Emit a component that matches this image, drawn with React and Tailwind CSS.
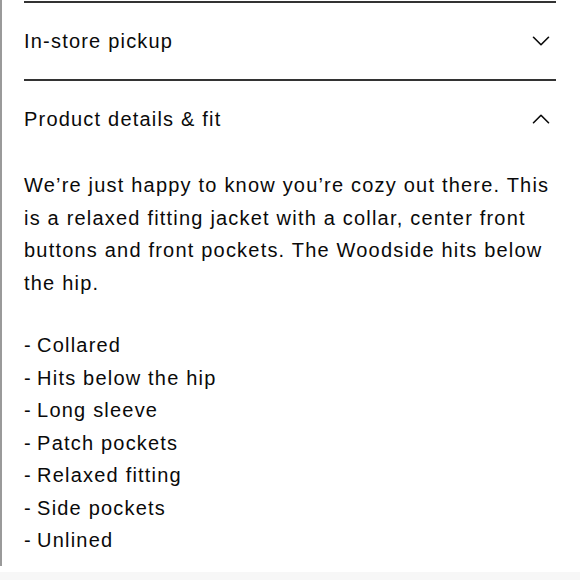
import { ChevronDown, ChevronUp } from 'lucide-react'

const bullets = [
  'Collared',
  'Hits below the hip',
  'Long sleeve',
  'Patch pockets',
  'Relaxed fitting',
  'Side pockets',
  'Unlined',
]

function Row({ title, open }) {
  const Icon = open ? ChevronUp : ChevronDown
  return (
    <div className="flex items-center justify-between h-[78px] border-t-2 border-[#333]">
      <span className="text-[20px] tracking-[0.06em] text-[#0a0a0a]">{title}</span>
      <Icon size={30} strokeWidth={1.3} className="text-[#0a0a0a]" />
    </div>
  )
}

export default function App() {
  return (
    <div className="w-[580px] h-[580px] bg-white flex flex-col" style={{ fontFamily: '"Liberation Sans", Arial, sans-serif' }}>
      <div className="h-[566px] border-l-2 border-[#9a9a9a] pl-[22px] pr-[24px] pt-[1px]">
        <Row title="In-store pickup" />
        <Row title="Product details & fit" open />
        <div className="text-[20px] tracking-[0.06em] leading-[32.5px] text-[#0a0a0a] pt-[12px]">
          <p>
            We’re just happy to know you’re cozy out there. This is a relaxed fitting jacket with a collar, center front buttons and front pockets. The Woodside hits below the hip.
          </p>
          <ul className="mt-[30px]">
            {bullets.map(b => <li key={b}>-{'\u2009'}{b}</li>)}
          </ul>
        </div>
      </div>
      <div className="h-[6px]" />
      <div className="flex-1 bg-[#f7f7f7]" />
    </div>
  )
}
